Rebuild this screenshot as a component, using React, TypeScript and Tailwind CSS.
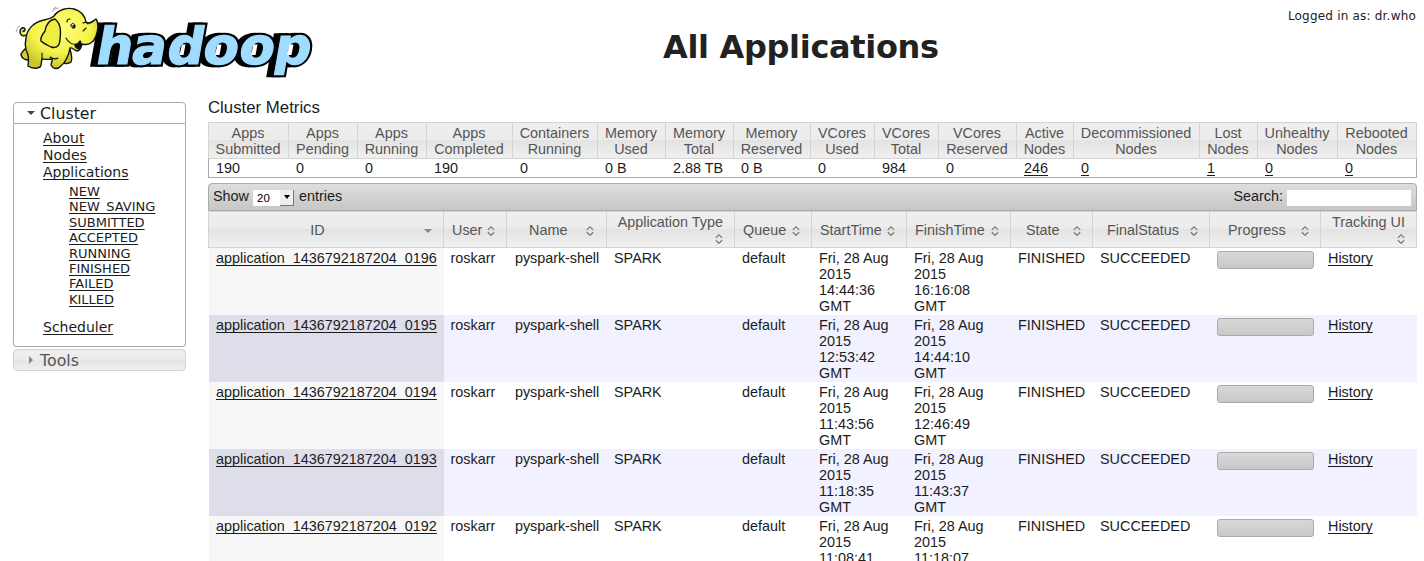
import React from "react";

const metrics: [string, string, string, boolean?][] = [
  ["Apps", "Submitted", "190"],
  ["Apps", "Pending", "0"],
  ["Apps", "Running", "0"],
  ["Apps", "Completed", "190"],
  ["Containers", "Running", "0"],
  ["Memory", "Used", "0 B"],
  ["Memory", "Total", "2.88 TB"],
  ["Memory", "Reserved", "0 B"],
  ["VCores", "Used", "0"],
  ["VCores", "Total", "984"],
  ["VCores", "Reserved", "0"],
  ["Active", "Nodes", "246", true],
  ["Decommissioned", "Nodes", "0", true],
  ["Lost", "Nodes", "1", true],
  ["Unhealthy", "Nodes", "0", true],
  ["Rebooted", "Nodes", "0", true],
];

const metricHeadCols =
  "grid grid-cols-[80px_69px_69px_86px_85px_68px_68px_77px_64px_64px_78px_57px_126px_58px_80px_79px]";
const metricCols =
  "grid grid-cols-[80px_69px_69px_86px_85px_68px_68px_77px_64px_64px_78px_57px_126px_58px_80px_78px]";
const appHeadCols =
  "grid grid-cols-[235px_63px_100px_128px_77px_95px_104px_82px_117px_111px_96px]";
const appCols =
  "grid grid-cols-[235px_63.5px_99.5px_128px_77px_95px_104px_82px_117px_111px_96px]";

const headers: { label: string; pad: string; wrap?: boolean }[] = [
  { label: "User", pad: "pl-[8px] pr-[11px]" },
  { label: "Name", pad: "pl-[22px] pr-[12px]" },
  { label: "Application Type", pad: "", wrap: true },
  { label: "Queue", pad: "pl-[8px] pr-[11px]" },
  { label: "StartTime", pad: "pl-[8px] pr-[11px]" },
  { label: "FinishTime", pad: "pl-[8px] pr-[11px]" },
  { label: "State", pad: "pl-[15px] pr-[11px]" },
  { label: "FinalStatus", pad: "pl-[14px] pr-[11px]" },
  { label: "Progress", pad: "pl-[18px] pr-[11px]" },
  { label: "Tracking UI", pad: "", wrap: true },
];

const apps = [
  { id: "0196", start: "14:44:36", finish: "16:16:08" },
  { id: "0195", start: "12:53:42", finish: "14:44:10" },
  { id: "0194", start: "11:43:56", finish: "12:46:49" },
  { id: "0193", start: "11:18:35", finish: "11:43:37" },
  { id: "0192", start: "11:08:41", finish: "11:18:07" },
];

const states = ["NEW", "NEW_SAVING", "SUBMITTED", "ACCEPTED", "RUNNING", "FINISHED", "FAILED", "KILLED"];

const headFill =
  "bg-[linear-gradient(#efefef_0%,#ebebeb_49%,#e3e3e3_50%,#f0f0f0_100%)]";

function SortIcon() {
  return (
    <svg className="block shrink-0" width="8" height="10" viewBox="0 0 8 10" fill="none" stroke="#777" strokeWidth="1.2">
      <path d="M0.8 3.9 L4 0.9 L7.2 3.9 M0.8 6.3 L4 9.3 L7.2 6.3" />
    </svg>
  );
}

function Link({ children, className = "" }: { children: React.ReactNode; className?: string }) {
  return (
    <a href="#" className={`underline decoration-1 underline-offset-2 [text-decoration-skip-ink:none] ${className}`}>
      {children}
    </a>
  );
}

const letterX = "0 35 70 105.5 141 175.5";

function Logo() {
  return (
    <svg className="block shrink-0" width="360" height="90" viewBox="0 0 360 90">
      <defs>
        <radialGradient id="hide" cx="0.5" cy="0.35" r="0.65">
          <stop offset="0" stopColor="#ffff7c" />
          <stop offset="0.6" stopColor="#f5f34c" />
          <stop offset="1" stopColor="#c9c62a" />
        </radialGradient>
      </defs>
      <g
        fontFamily="'DejaVu Sans'"
        fontWeight="700"
        fontSize="51"
        strokeLinejoin="miter"
        transform="translate(94 64) skewX(-10) scale(1.015 1)"
      >
        <g fill="#000" stroke="#000" strokeWidth="5.5" aria-hidden="true">
          <text x={letterX} transform="translate(-5 0)">hadoop</text>
          <text x={letterX}>hadoop</text>
        </g>
        <text x={letterX} fill="#9fdcff" stroke="#9fdcff" strokeWidth="1.2">hadoop</text>
      </g>
      <path
        fill="#fff"
        d="M182 44.500h3.500l-2 10.500h-4z M217.500 44.500h4l-2 10.500h-4.500z M253.500 44.500h4l-2 10.500h-4.500z M289.500 44.500h4l-2 10.500h-4.500z"
      />
      <g stroke="#111" strokeWidth="1.4" strokeLinejoin="round" strokeLinecap="round">
        <path fill="#e5e33a" d="M26 35 C23 37 20 35 20 32 C20 29 22 27 24 28 C26 29 25 32 23 31" />
        <path fill="#d3d02d" d="M25 49 C23 51 21 53 21 55 C22 58 25 60 29 60 L34 53Z" />
        <path fill="#c5c228" d="M60 54 L70 49 C71 54 73 58 71 62 C67 65 62 63 59 60Z" />
        <path
          fill="url(#hide)"
          d="M26 38 C27 29 34 22 44 20 C49 19 52 18 54 16 C58 10 67 7 74 9 C81 11 85 16 86 22 C90 25 93 21 96 19 C99 23 98 30 96 36 C94 42 89 46 82 44 C81 48 80 51 77 51 C74 50 72 47 70 48 C69 55 65 63 61 66 C57 70 53 69 51 65 C51 63 53 61 52 59 C48 60 44 59 42 59 C41 62 42 65 40 67 C36 69 31 68 28 66 C29 60 29 55 26 50 C25 46 25 42 26 38Z"
        />
        <path fill="#efee43" d="M55 19 C49 20 46 25 45 31 C42 35 40 38 41 41 C44 44 48 45 51 47 C57 49 60 45 60 39 C61 31 61 24 55 19Z" />
        <path fill="#fff" strokeWidth="0.9" d="M71 25 C72 22 75 23 75 27 C73 29 71 28 71 25Z" />
        <path fill="#111" d="M75 45 C78 44 79 43 80 41 C82 44 81 48 79 49 C77 49 75 47 75 45Z" />
        <g fill="none" strokeWidth="1.1">
          <path d="M67 22 C67 20 68 19 70 19" />
          <path d="M83 23 C85 22 87 22 88 24" />
          <path d="M83 31 L86 28" />
          <path d="M66 38 C68 42 72 45 76 44" />
          <path d="M42 53 C42 56 42 58 42 59" />
          <path d="M50 57 C53 59 55 60 58 58" />
        </g>
        <path fill="#111" strokeWidth="0.9" d="M73.2 25.2 L74.8 25 L74.8 28 L73.2 28Z" />
      </g>
      <path fill="none" stroke="#777" strokeWidth="0.7" d="M17 28 L20 26 M16 32 L17 29 M52 12 C54 9 56 8 59 8 M53 9 L56 7" />
    </svg>
  );
}

function Sidebar() {
  return (
    <nav className="w-[173px] shrink-0 font-['DejaVu_Sans',Verdana,sans-serif] text-[#1c1c1c]">
      <div className="h-[22px] rounded-t border border-[#aaa] flex items-center pl-[13px]">
        <span className="w-0 h-0 border-x-4 border-x-transparent border-t-4 border-t-[#444]" />
        <span className="ml-[5px] mt-px text-[15.8px] leading-5">Cluster</span>
      </div>
      <div className="h-[223px] rounded-b border border-t-0 border-[#aaa] pl-[29px] pt-[6px] text-[14px] leading-[17px]">
        <ul>
          <li><Link>About</Link></li>
          <li><Link>Nodes</Link></li>
          <li><Link>Applications</Link></li>
        </ul>
        <ul className="ml-[26px] mt-[3px] text-[13px] leading-[15.4px]">
          {states.map((s) => (
            <li key={s}><Link>{s}</Link></li>
          ))}
        </ul>
        <div className="mt-[12px]"><Link>Scheduler</Link></div>
      </div>
      <div className={`mt-[2px] h-[22px] rounded border border-[#d3d3d3] flex items-center pl-[15px] text-[#555] ${headFill}`}>
        <span className="w-0 h-0 border-y-4 border-y-transparent border-l-4 border-l-[#888]" />
        <span className="ml-[7px] mt-px text-[15.8px] leading-5">Tools</span>
      </div>
    </nav>
  );
}

function Metrics() {
  return (
    <section>
      <h2 className="h-[22px] pt-px text-[16.8px] leading-[22px]">Cluster Metrics</h2>
      <div className={`mt-[4px] h-[37px] border-y border-l border-[#d3d3d3] text-[#555] ${headFill}`}>
        <div className={metricHeadCols}>
          {metrics.map(([a, b], i) => (
            <div key={i} className="h-[35px] border-r border-[#d3d3d3] pt-[2px] pr-px text-center leading-4 whitespace-nowrap">
              {a}
              <br />
              {b}
            </div>
          ))}
        </div>
      </div>
      <div className={`h-[19px] border-x border-b border-[#aaa] ${metricCols}`}>
        {metrics.map(([, , v, link], i) => (
          <div key={i} className="pl-[7px] leading-[18px] whitespace-nowrap">
            {link ? <Link>{v}</Link> : v}
          </div>
        ))}
      </div>
    </section>
  );
}

function Toolbar() {
  return (
    <div className="mt-[5px] h-[28px] rounded-t border border-[#aaa] bg-[linear-gradient(#dedede,#c6c6c6)] flex items-center pl-[4px] pr-[5px]">
      <span className="-mt-[2px]">Show</span>
      <span className="ml-[4px] mt-px flex h-4 w-[41px] items-stretch bg-white text-[11.5px] leading-4 text-black">
        <span className="flex-1 pl-[4px]">20</span>
        <span className="flex w-[14px] items-center justify-center border-r border-b border-[#777] bg-[#eee]">
          <span className="w-0 h-0 border-x-[3.5px] border-x-transparent border-t-4 border-t-black" />
        </span>
      </span>
      <span className="-mt-[2px] ml-[5px]">entries</span>
      <span className="-mt-[2px] ml-auto">Search:</span>
      <input className="ml-[4px] mt-px h-4 w-[124px] bg-white outline-none" aria-label="Search" />
    </div>
  );
}

function AppTable() {
  return (
    <section>
      <div className={`h-[37px] border-y border-l border-[#d3d3d3] text-[#555] ${headFill}`}>
        <div className={appHeadCols}>
          <div className="flex h-[35px] items-center border-r border-[#d3d3d3] pr-[11px]">
            <span className="flex-1 pl-[2px] text-center">ID</span>
            <span className="mt-[2px] w-0 h-0 border-x-4 border-x-transparent border-t-4 border-t-[#888]" />
          </div>
          {headers.map((h) =>
            h.wrap ? (
              <div key={h.label} className="flex h-[35px] flex-col items-end border-r border-[#d3d3d3] pr-[11px] pt-[2px] leading-4 whitespace-nowrap">
                <span>{h.label}</span>
                <span className="mt-[4px]"><SortIcon /></span>
              </div>
            ) : (
              <div key={h.label} className={`flex h-[35px] items-center justify-between border-r border-[#d3d3d3] whitespace-nowrap ${h.pad}`}>
                <span>{h.label}</span>
                <span className="mt-[2px]"><SortIcon /></span>
              </div>
            )
          )}
        </div>
      </div>
      {apps.map((a, i) => (
        <div key={a.id} className={`ml-px h-[67px] leading-4 ${appCols} ${i % 2 ? "bg-[#f1f1ff]" : "bg-white"}`}>
          <div className={`h-[67px] pl-[7px] pt-[2px] ${i % 2 ? "bg-[#dedeea]" : "bg-[#f7f7f7]"}`}>
            <Link>application_1436792187204_{a.id}</Link>
          </div>
          <div className="pl-[6.5px] pt-[2px]">roskarr</div>
          <div className="pl-[7.5px] pt-[2px] tracking-[-0.05px] whitespace-nowrap">pyspark-shell</div>
          <div className="pl-[7px] pt-[2px]">SPARK</div>
          <div className="pl-[7px] pt-[2px]">default</div>
          <div className="pl-[7px] pt-[2px] whitespace-nowrap">Fri, 28 Aug<br />2015<br />{a.start}<br />GMT</div>
          <div className="pl-[7px] pt-[2px] whitespace-nowrap">Fri, 28 Aug<br />2015<br />{a.finish}<br />GMT</div>
          <div className="pl-[7px] pt-[2px]">FINISHED</div>
          <div className="pl-[7px] pt-[2px]">SUCCEEDED</div>
          <div className="pl-[7px] pt-[3px]">
            <div className="h-[18px] w-[97px] rounded-[3px] border border-[#aaa] bg-[linear-gradient(#d8d8d8,#c8c8c8)]" />
          </div>
          <div className="pl-[7px] pt-[2px]"><Link>History</Link></div>
        </div>
      ))}
    </section>
  );
}

export default function App() {
  return (
    <div className="h-[561px] w-[1424px] overflow-hidden bg-white font-['Liberation_Sans',Arial,sans-serif] text-[14.4px] leading-4 text-[#1c1c1c]">
      <header className="flex h-[96px] font-['DejaVu_Sans',Verdana,sans-serif]">
        <Logo />
        <h1 className="ml-[303px] mt-[27px] text-[32px] leading-10 font-bold tracking-[-0.33px] text-[#222] whitespace-nowrap">All Applications</h1>
        <div className="ml-auto mr-[8px] mt-[8px] text-[12px] tracking-[0.2px] whitespace-nowrap">Logged in as: dr.who</div>
      </header>
      <div className="flex pl-[13px]">
        <div className="pt-[6px]"><Sidebar /></div>
        <main className="ml-[22px] w-[1209px] shrink-0">
          <Metrics />
          <Toolbar />
          <AppTable />
        </main>
      </div>
    </div>
  );
}
